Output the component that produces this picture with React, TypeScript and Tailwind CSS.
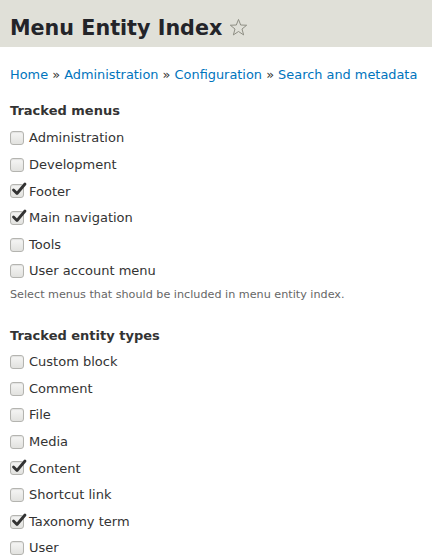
const menus = [
  { name: "Administration", checked: false },
  { name: "Development", checked: false },
  { name: "Footer", checked: true },
  { name: "Main navigation", checked: true },
  { name: "Tools", checked: false },
  { name: "User account menu", checked: false },
]

const entityTypes = [
  { name: "Custom block", checked: false },
  { name: "Comment", checked: false },
  { name: "File", checked: false },
  { name: "Media", checked: false },
  { name: "Content", checked: true },
  { name: "Shortcut link", checked: false },
  { name: "Taxonomy term", checked: true },
  { name: "User", checked: false },
]

function Checkbox({ name, checked }: { name: string; checked: boolean }) {
  return (
    <label className="flex items-center h-[26.6px] gap-[5px]">
      <span className="relative w-[14px] h-[14px] rounded-[3px] border border-[#b4b4b0] bg-gradient-to-b from-[#f6f6f5] to-[#e2e2df] shadow-[inset_0_1px_1px_rgba(0,0,0,0.08)] shrink-0">
        {checked && (
          <svg viewBox="0 0 16 16" className="absolute -top-[4px] left-[0px] w-[16px] h-[16px]">
            <path d="M2.5 9 L6 12.5 L14 3" fill="none" stroke="#333" strokeWidth="2.8" strokeLinecap="round" strokeLinejoin="round" />
          </svg>
        )}
      </span>
      <span className="text-[13px] text-[#333]">{name}</span>
    </label>
  )
}

export default function App() {
  return (
    <div className="w-[432px] min-h-[558px] bg-white font-['DejaVu_Sans',sans-serif] text-[#333]">
      {/* Header */}
      <div className="h-[47px] bg-[#e0e0d8] flex items-center px-[10px] pt-[10px]">
        <h1 className="text-[20.7px] font-bold text-[#232429] leading-none">Menu Entity Index</h1>
        <svg viewBox="0 0 20 20" className="ml-[7px] w-[19px] h-[19px] -mt-[3px]">
          <path
            d="M10 1.5 L12.3 7.4 L18.6 7.6 L13.7 11.6 L15.4 17.8 L10 14.2 L4.6 17.8 L6.3 11.6 L1.4 7.6 L7.7 7.4 Z"
            fill="none"
            stroke="#8a8a80"
            strokeWidth="1"
            strokeLinejoin="round"
          />
        </svg>
      </div>

      {/* Breadcrumb */}
      <nav className="px-[10px] pt-[18px] text-[12.9px] text-[#0074bd]">
        Home <span className="text-[#333]">»</span> Administration <span className="text-[#333]">»</span> Configuration{" "}
        <span className="text-[#333]">»</span> Search and metadata
      </nav>

      {/* Tracked menus */}
      <div className="px-[10px] pt-[17px]">
        <h3 className="text-[13px] font-bold mb-[4px]">Tracked menus</h3>
        {menus.map((m) => (
          <Checkbox key={m.name} {...m} />
        ))}
        <p className="text-[11.2px] text-[#666] mt-[3px]">Select menus that should be included in menu entity index.</p>
      </div>

      {/* Tracked entity types */}
      <div className="px-[10px] pt-[22px]">
        <h3 className="text-[13px] font-bold mb-[3px]">Tracked entity types</h3>
        {entityTypes.map((e) => (
          <Checkbox key={e.name} {...e} />
        ))}
      </div>
    </div>
  )
}
